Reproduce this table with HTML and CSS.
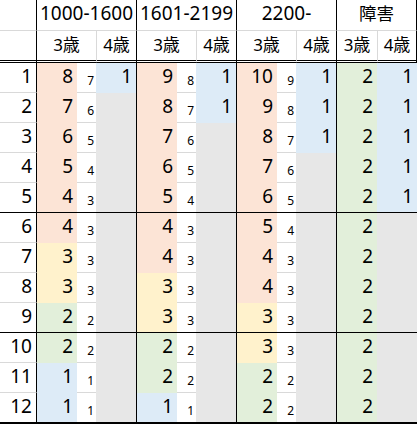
FILE: index.html
```html
<!DOCTYPE html>
<html lang="ja">
<head>
<meta charset="utf-8">
<title>表</title>
<link rel="stylesheet" href="styles.css">
</head>
<body>
<div class="sheet">
  <div class="row h1">
    <div class="c rn"></div>
    <div class="c grp span3">1000-1600</div>
    <div class="c grp span3">1601-2199</div>
    <div class="c grp span3">2200-</div>
    <div class="c grp span2 redge"><span class="cjk">障害</span></div>
  </div>
  <div class="row h2">
    <div class="c rn"></div>
    <div class="c span2">3歳</div>
    <div class="c f sub4">4歳</div>
    <div class="c span2">3歳</div>
    <div class="c f sub4">4歳</div>
    <div class="c span2">3歳</div>
    <div class="c f sub4">4歳</div>
    <div class="c">3歳</div>
    <div class="c sub4 redge">4歳</div>
  </div>

  <div class="row">
    <div class="c rn w">1</div>
    <div class="c m pe">8</div><div class="c s w">7</div><div class="c m f bl">1</div>
    <div class="c m pe">9</div><div class="c s w">8</div><div class="c m f bl">1</div>
    <div class="c m pe">10</div><div class="c s w">9</div><div class="c m f bl">1</div>
    <div class="c m gr">2</div><div class="c m bl">1</div>
  </div>
  <div class="row">
    <div class="c rn w">2</div>
    <div class="c m pe">7</div><div class="c s w">6</div><div class="c m f gy"></div>
    <div class="c m pe">8</div><div class="c s w">7</div><div class="c m f bl">1</div>
    <div class="c m pe">9</div><div class="c s w">8</div><div class="c m f bl">1</div>
    <div class="c m gr">2</div><div class="c m bl">1</div>
  </div>
  <div class="row">
    <div class="c rn w">3</div>
    <div class="c m pe">6</div><div class="c s w">5</div><div class="c m f gy"></div>
    <div class="c m pe">7</div><div class="c s w">6</div><div class="c m f gy"></div>
    <div class="c m pe">8</div><div class="c s w">7</div><div class="c m f bl">1</div>
    <div class="c m gr">2</div><div class="c m bl">1</div>
  </div>
  <div class="row">
    <div class="c rn w">4</div>
    <div class="c m pe">5</div><div class="c s w">4</div><div class="c m f gy"></div>
    <div class="c m pe">6</div><div class="c s w">5</div><div class="c m f gy"></div>
    <div class="c m pe">7</div><div class="c s w">6</div><div class="c m f gy"></div>
    <div class="c m gr">2</div><div class="c m bl">1</div>
  </div>
  <div class="row sep">
    <div class="c rn w">5</div>
    <div class="c m pe">4</div><div class="c s w">3</div><div class="c m f gy"></div>
    <div class="c m pe">5</div><div class="c s w">4</div><div class="c m f gy"></div>
    <div class="c m pe">6</div><div class="c s w">5</div><div class="c m f gy"></div>
    <div class="c m gr">2</div><div class="c m bl">1</div>
  </div>
  <div class="row">
    <div class="c rn w">6</div>
    <div class="c m pe">4</div><div class="c s w">3</div><div class="c m f gy"></div>
    <div class="c m pe">4</div><div class="c s w">3</div><div class="c m f gy"></div>
    <div class="c m pe">5</div><div class="c s w">4</div><div class="c m f gy"></div>
    <div class="c m gr">2</div><div class="c m gy"></div>
  </div>
  <div class="row">
    <div class="c rn w">7</div>
    <div class="c m ye">3</div><div class="c s w">3</div><div class="c m f gy"></div>
    <div class="c m pe">4</div><div class="c s w">3</div><div class="c m f gy"></div>
    <div class="c m pe">4</div><div class="c s w">3</div><div class="c m f gy"></div>
    <div class="c m gr">2</div><div class="c m gy"></div>
  </div>
  <div class="row">
    <div class="c rn w">8</div>
    <div class="c m ye">3</div><div class="c s w">3</div><div class="c m f gy"></div>
    <div class="c m ye">3</div><div class="c s w">3</div><div class="c m f gy"></div>
    <div class="c m pe">4</div><div class="c s w">3</div><div class="c m f gy"></div>
    <div class="c m gr">2</div><div class="c m gy"></div>
  </div>
  <div class="row sep">
    <div class="c rn w">9</div>
    <div class="c m gr">2</div><div class="c s w">2</div><div class="c m f gy"></div>
    <div class="c m ye">3</div><div class="c s w">3</div><div class="c m f gy"></div>
    <div class="c m ye">3</div><div class="c s w">3</div><div class="c m f gy"></div>
    <div class="c m gr">2</div><div class="c m gy"></div>
  </div>
  <div class="row">
    <div class="c rn w">10</div>
    <div class="c m gr">2</div><div class="c s w">2</div><div class="c m f gy"></div>
    <div class="c m gr">2</div><div class="c s w">2</div><div class="c m f gy"></div>
    <div class="c m ye">3</div><div class="c s w">3</div><div class="c m f gy"></div>
    <div class="c m gr">2</div><div class="c m gy"></div>
  </div>
  <div class="row">
    <div class="c rn w">11</div>
    <div class="c m bl">1</div><div class="c s w">1</div><div class="c m f gy"></div>
    <div class="c m gr">2</div><div class="c s w">2</div><div class="c m f gy"></div>
    <div class="c m gr">2</div><div class="c s w">2</div><div class="c m f gy"></div>
    <div class="c m gr">2</div><div class="c m gy"></div>
  </div>
  <div class="row end">
    <div class="c rn w">12</div>
    <div class="c m bl">1</div><div class="c s w">1</div><div class="c m f gy"></div>
    <div class="c m bl">1</div><div class="c s w">1</div><div class="c m f gy"></div>
    <div class="c m gr">2</div><div class="c s w">2</div><div class="c m f gy"></div>
    <div class="c m gr">2</div><div class="c m gy"></div>
  </div>
</div>
</body>
</html>
```
FILE: styles.css
```css
html, body {
  margin: 0;
  padding: 0;
  background: #ffffff;
}

.sheet {
  display: grid;
  grid-template-columns: 37px 40px 19px 41px 40px 19px 41px 40px 19px 41px 40px 40px;
  grid-template-rows: 31px 32px repeat(11, 30px) 31px;
  width: 417px;
  color: #000;
  font-family: "Noto Sans", "Noto Sans CJK JP", sans-serif;
}

.row {
  display: contents;
}

.c {
  box-sizing: border-box;
  font-size: 19px;
  line-height: 20px;
  padding: 3px 4px 0 0;
  text-align: right;
  white-space: nowrap;
  overflow: hidden;
  background: #fff;
}

.span2 { grid-column: span 2; }
.span3 { grid-column: span 3; }

/* header rows */
.h1 .c {
  text-align: center;
  padding-right: 0;
  border-bottom: 1px solid #d9d9d9;
}
.h1 .grp {
  border-right: 1px solid #000;
}
.cjk {
  font-size: 17.5px;
}
.h2 .c {
  text-align: center;
  padding: 4px 0 0 0;
  font-size: 17px;
  border-bottom: 3px double #000;
}
.h2 .sub4 {
  border-left: 1px solid #d9d9d9;
}
.redge {
  border-right: 1px solid #000;
}

/* vertical black separators */
.rn,
.f {
  border-right: 1px solid #000;
}

/* small count column */
.s {
  font-size: 12px;
  line-height: 12px;
  padding-top: 12px;
  padding-right: 2px;
}

/* gridline on plain white cells */
.w {
  border-bottom: 1px solid #d9d9d9;
}

.sep .c {
  border-bottom: 1px solid #000;
}
.end .c {
  border-bottom: 2px solid #000;
}

/* fills */
.pe { background: #fce4d6; }
.ye { background: #fff2cc; }
.gr { background: #e2efda; }
.bl { background: #ddebf7; }
.gy { background: #e7e7e7; }
```
